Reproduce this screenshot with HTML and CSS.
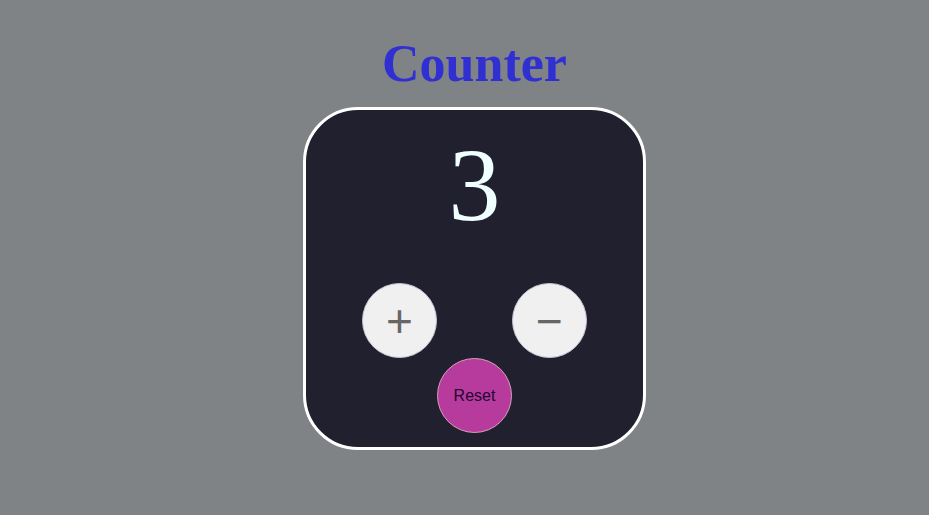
FILE: index.html
```html
<!DOCTYPE html>
<html lang="en">
<head>
<meta charset="utf-8">
<title>Counter</title>
<link rel="stylesheet" href="styles.css">
</head>
<body>
<main class="app">
  <h1 class="title">Counter</h1>
  <section class="card">
    <div class="count">3</div>
    <div class="controls">
      <button class="btn btn-inc" type="button">+</button>
      <button class="btn btn-dec" type="button">&minus;</button>
      <button class="btn btn-reset" type="button">Reset</button>
    </div>
  </section>
</main>
</body>
</html>
```
FILE: styles.css
```css
html, body {
  margin: 0;
  padding: 0;
}
body {
  background: #808386;
  font-family: "Liberation Serif", "Times New Roman", serif;
}
.app {
  display: flex;
  flex-direction: column;
  align-items: center;
  padding: 34px 0 0 20px;
}
.title {
  margin: 0 0 13px;
  font-size: 52px;
  font-weight: bold;
  line-height: 1.15;
  color: #3030d2;
}
.card {
  box-sizing: border-box;
  width: 343px;
  height: 343px;
  border: 3px solid #ffffff;
  border-radius: 55px;
  background: #20202f;
  display: flex;
  flex-direction: column;
  align-items: center;
  padding-top: 15px;
}
.count {
  font-size: 104px;
  line-height: 1.15;
  color: #f0ffff;
}
.controls {
  margin-top: 39px;
  display: grid;
  grid-template-columns: 75px 75px 75px;
  grid-template-rows: 75px 75px;
}
.btn {
  box-sizing: border-box;
  width: 75px;
  height: 75px;
  border-radius: 50%;
  padding: 0;
  margin: 0;
  display: flex;
  align-items: center;
  justify-content: center;
  font-family: "Liberation Sans", Arial, sans-serif;
}
.btn-inc, .btn-dec {
  background: #f0f0f0;
  border: 1px solid #c8c4d8;
  color: #666666;
  font-size: 46px;
  line-height: 1;
}
.btn-inc { grid-column: 1; grid-row: 1; }
.btn-dec { grid-column: 3; grid-row: 1; }
.btn-reset {
  grid-column: 2;
  grid-row: 2;
  background: #b73a9d;
  border: 1px solid #d8a0b8;
  color: #220630;
  font-size: 16px;
}
```
